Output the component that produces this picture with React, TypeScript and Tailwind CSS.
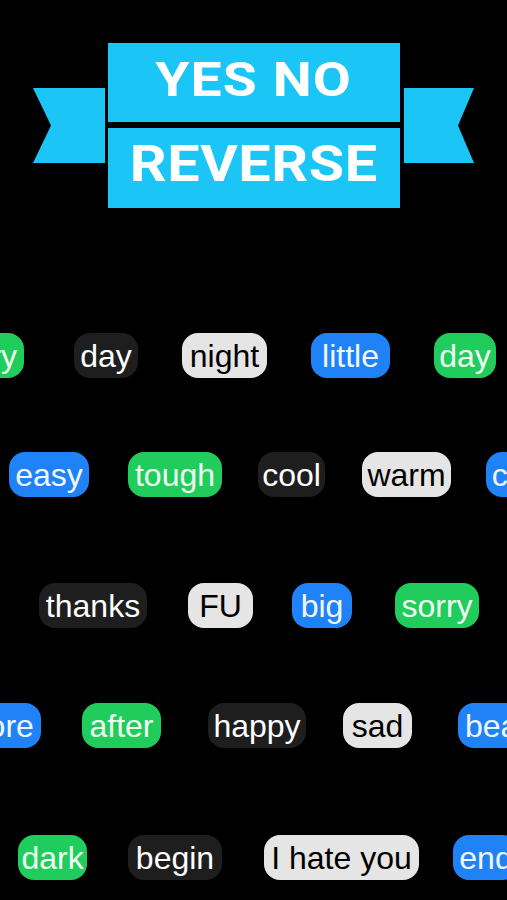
type Pill = {
  text: string;
  kind: "green" | "blue" | "dark" | "light";
  cls: string;
};

const kindCls: Record<Pill["kind"], string> = {
  green: "bg-[#20cd5c] text-[#effff2]",
  blue: "bg-[#1f83f7] text-[#f2f7ff]",
  dark: "bg-[#1e1e1e] text-white",
  light: "bg-[#e5e5e5] text-black",
};

const rows: { cls: string; pills: Pill[] }[] = [
  {
    cls: "mt-[125px]",
    pills: [
      { text: "sorry", kind: "green", cls: "w-[85px] ml-[-61px]" },
      { text: "day", kind: "dark", cls: "w-[64px] ml-[50px]" },
      { text: "night", kind: "light", cls: "w-[85px] ml-[44px]" },
      { text: "little", kind: "blue", cls: "w-[79px] ml-[44px]" },
      { text: "day", kind: "green", cls: "w-[62px] ml-[44px]" },
    ],
  },
  {
    cls: "mt-[74px]",
    pills: [
      { text: "easy", kind: "blue", cls: "w-[80px] ml-[9px]" },
      { text: "tough", kind: "green", cls: "w-[94px] ml-[39px]" },
      { text: "cool", kind: "dark", cls: "w-[67px] ml-[36px]" },
      { text: "warm", kind: "light", cls: "w-[89px] ml-[37px]" },
      { text: "cold", kind: "blue", cls: "w-[70px] ml-[35px]" },
    ],
  },
  {
    cls: "mt-[86px]",
    pills: [
      { text: "thanks", kind: "dark", cls: "w-[108px] ml-[39px]" },
      { text: "FU", kind: "light", cls: "w-[65px] ml-[41px]" },
      { text: "big", kind: "blue", cls: "w-[60px] ml-[39px]" },
      { text: "sorry", kind: "green", cls: "w-[84px] ml-[43px]" },
    ],
  },
  {
    cls: "mt-[75px]",
    pills: [
      { text: "before", kind: "blue", cls: "w-[105px] ml-[-64px]" },
      { text: "after", kind: "green", cls: "w-[79px] ml-[41px]" },
      { text: "happy", kind: "dark", cls: "w-[98px] ml-[47px]" },
      { text: "sad", kind: "light", cls: "w-[69px] ml-[37px]" },
      { text: "beauty", kind: "blue", cls: "w-[110px] ml-[46px]" },
    ],
  },
  {
    cls: "mt-[87px]",
    pills: [
      { text: "dark", kind: "green", cls: "w-[69px] ml-[18px]" },
      { text: "begin", kind: "dark", cls: "w-[94px] ml-[41px]" },
      { text: "I hate you", kind: "light", cls: "w-[155px] ml-[42px]" },
      { text: "end", kind: "blue", cls: "w-[66px] ml-[34px]" },
    ],
  },
];

const Banner = () => (
  <div className="flex items-center pl-[33px] pt-[43px]">
    <div className="w-[72px] h-[75px] bg-[#1bc6f7] [clip-path:polygon(0_0,100%_0,100%_100%,0_100%,18px_50%)]" />
    <div className="ml-[3px] w-[292px] flex flex-col gap-[6px] font-['Roboto',sans-serif] font-bold text-white leading-none">
      <div className="h-[79px] bg-[#1bc6f7] flex items-center justify-center pb-[6px]">
        <span className="text-[48px] tracking-[1px] scale-x-[1.15]">YES NO</span>
      </div>
      <div className="h-[80px] bg-[#1bc6f7] flex items-center justify-center pb-[8px]">
        <span className="text-[50px] tracking-[0.5px] scale-x-[1.15]">REVERSE</span>
      </div>
    </div>
    <div className="ml-[4px] w-[70px] h-[75px] bg-[#1bc6f7] [clip-path:polygon(0_0,100%_0,calc(100%-16px)_50%,100%_100%,0_100%)]" />
  </div>
);

export default function App() {
  return (
    <div className="w-[507px] h-[900px] bg-black overflow-hidden font-['Liberation_Sans',Arial,sans-serif]">
      <Banner />
      {rows.map((row, i) => (
        <div key={i} className={`flex ${row.cls}`}>
          {row.pills.map((p, j) => (
            <div
              key={j}
              className={`shrink-0 h-[45px] rounded-[16px] flex items-center justify-center whitespace-nowrap text-[32px] leading-none ${kindCls[p.kind]} ${p.cls}`}
            >
              {p.text}
            </div>
          ))}
        </div>
      ))}
    </div>
  );
}
